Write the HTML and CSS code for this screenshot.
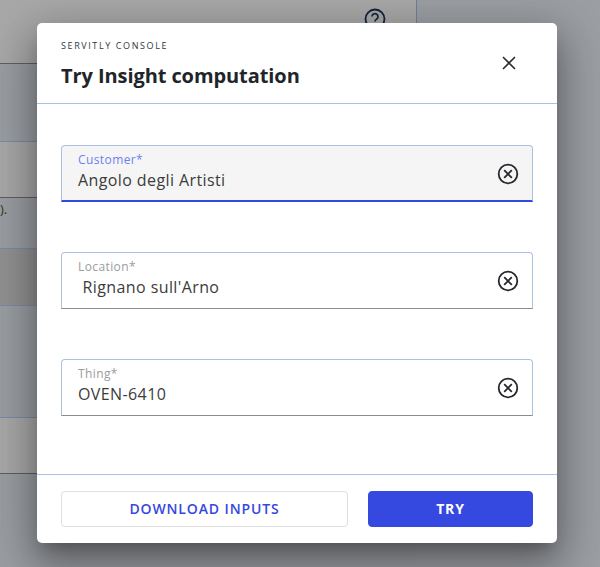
FILE: index.html
```html
<!DOCTYPE html>
<html lang="en">
<head>
<meta charset="utf-8">
<title>Try Insight computation</title>
<link rel="stylesheet" href="styles.css">
</head>
<body>
<div class="page">
  <main class="table">
    <div class="row row-gray row-top">
      <svg class="help" width="22" height="22" viewBox="0 0 22 22" fill="none" aria-hidden="true">
        <circle cx="11" cy="11" r="9.5" stroke="#14233c" stroke-width="1.8"/>
        <path d="M8 8.6a3 3 0 1 1 4.6 2.5c-1 .7-1.6 1.2-1.6 2.4" stroke="#14233c" stroke-width="1.7"/>
        <circle cx="11" cy="16" r="1" fill="#14233c"/>
      </svg>
    </div>
    <div class="row row-blue h-78"></div>
    <div class="row row-gray h-56 line-dark"></div>
    <div class="row row-blue h-51 note"><span class="note-text">).</span></div>
    <div class="row row-dark h-57"></div>
    <div class="row row-blue h-112"></div>
    <div class="row row-gray h-56 line-dark"></div>
    <div class="row row-blue row-fill"></div>
  </main>
  <aside class="side"><div class="side-rule"></div></aside>
</div>

<div class="overlay">
  <section class="modal">
    <header class="modal-head">
      <div>
        <p class="eyebrow">SERVITLY CONSOLE</p>
        <h1 class="title">Try Insight computation</h1>
      </div>
      <svg class="close" width="16" height="16" viewBox="0 0 16 16" fill="none" aria-hidden="true">
        <path d="M2 2l12 12M14 2L2 14" stroke="#2a2d33" stroke-width="1.6"/>
      </svg>
    </header>

    <div class="modal-body">
      <div class="field field-active">
        <div class="field-text">
          <span class="field-label">Customer*</span>
          <span class="field-value">Angolo degli Artisti</span>
        </div>
        <svg class="clear" width="22" height="22" viewBox="0 0 22 22" fill="none" aria-hidden="true">
          <circle cx="11" cy="11" r="9.3" stroke="#26282c" stroke-width="1.8"/>
          <path d="M7.2 7.2l7.6 7.6M14.8 7.2l-7.6 7.6" stroke="#26282c" stroke-width="1.8"/>
        </svg>
      </div>
      <div class="field">
        <div class="field-text">
          <span class="field-label">Location*</span>
          <span class="field-value"> Rignano sull'Arno</span>
        </div>
        <svg class="clear" width="22" height="22" viewBox="0 0 22 22" fill="none" aria-hidden="true">
          <circle cx="11" cy="11" r="9.3" stroke="#26282c" stroke-width="1.8"/>
          <path d="M7.2 7.2l7.6 7.6M14.8 7.2l-7.6 7.6" stroke="#26282c" stroke-width="1.8"/>
        </svg>
      </div>
      <div class="field">
        <div class="field-text">
          <span class="field-label">Thing*</span>
          <span class="field-value">OVEN-6410</span>
        </div>
        <svg class="clear" width="22" height="22" viewBox="0 0 22 22" fill="none" aria-hidden="true">
          <circle cx="11" cy="11" r="9.3" stroke="#26282c" stroke-width="1.8"/>
          <path d="M7.2 7.2l7.6 7.6M14.8 7.2l-7.6 7.6" stroke="#26282c" stroke-width="1.8"/>
        </svg>
      </div>
    </div>

    <footer class="modal-foot">
      <button class="btn btn-outline" type="button">DOWNLOAD INPUTS</button>
      <button class="btn btn-primary" type="button">TRY</button>
    </footer>
  </section>
</div>
</body>
</html>
```
FILE: styles.css
```css
* { box-sizing: border-box; }
html, body { margin: 0; height: 100%; overflow: hidden; }
body { font-family: "Open Sans", sans-serif; color: #212529; }

.page { display: flex; height: 567px; width: 600px; background: #9b9ea3; }
.table { width: 416px; display: flex; flex-direction: column; flex: none; }
.side { flex: 1; background: #9b9ea3; }
.side-rule { height: 300px; border-left: 1px solid #6f7f9c; }

.row { border-bottom: 1px solid #7b8aa6; flex: none; }
.row-gray { background: #a8a8a8; }
.row-dark { background: #919191; }
.row-blue { background: #9a9da2; }
.row-top { height: 64px; border-bottom-color: #5c6068; display: flex; justify-content: flex-end; padding: 8px 30px 0 0; align-items: flex-start; }
.row-fill { flex: 1; border-bottom: 0; }
.h-78 { height: 78px; }
.h-56 { height: 56px; }
.h-51 { height: 51px; }
.h-57 { height: 57px; }
.h-112 { height: 112px; }
.line-dark { border-bottom-color: #5c5f64; }
.note { font-size: 13px; line-height: 20px; padding-top: 1px; color: #3a3320; }
.note-text { display: block; }

.overlay { position: absolute; inset: 0; display: flex; justify-content: flex-start; align-items: flex-start; padding: 23px 0 0 37px; }
.modal { width: 520px; height: 520px; background: #fff; border-radius: 5px; box-shadow: 0 11px 15px -7px rgba(0,0,0,.25), 0 24px 38px 3px rgba(0,0,0,.22), 0 9px 46px 8px rgba(0,0,0,.18); display: flex; flex-direction: column; }

.modal-head { height: 81px; flex: none; padding: 17px 40px 0 24px; border-bottom: 1px solid #a9c1e2; display: flex; justify-content: space-between; align-items: flex-start; }
.eyebrow { margin: 0; font-size: 9px; line-height: 12px; letter-spacing: 1.6px; color: #33373d; }
.title { margin: 10px 0 0; font-size: 20px; line-height: 27px; font-weight: 700; letter-spacing: -0.08px; color: #212529; }
.close { margin-top: 15px; }

.modal-body { flex: 1; padding: 41px 24px 0; display: flex; flex-direction: column; gap: 50px; }
.field { height: 57px; flex: none; display: flex; align-items: flex-start; justify-content: space-between; padding: 6px 13px 0 16px; border: 1px solid #a9c1e2; border-bottom-color: #8c8c8c; border-radius: 4px 4px 0 0; background: #fff; }
.field-active { background: #f5f5f5; border-bottom: 2px solid #3548e0; }
.field-text { display: flex; flex-direction: column; }
.field-label { font-size: 12px; line-height: 16px; letter-spacing: .4px; color: #9b9b9b; }
.field-active .field-label { color: #6e7ff3; }
.field-value { font-size: 16px; line-height: 24px; letter-spacing: .4px; color: #3c3c3c; white-space: pre; }
.clear { flex: none; margin-top: 11px; }

.modal-foot { height: 69px; flex: none; border-top: 1px solid #a9c1e2; padding: 16px 24px 0; display: flex; justify-content: space-between; align-items: flex-start; }
.btn { height: 36px; font-family: "Open Sans", sans-serif; font-size: 14px; font-weight: 600; letter-spacing: .87px; border-radius: 4px; padding: 0 0 2px; }
.btn-outline { width: 287px; background: #fff; border: 1px solid #dfdfdf; color: #3548e0; }
.btn-primary { width: 165px; background: #3548e0; border: 1px solid #3548e0; color: #fff; font-weight: 700; }
```
